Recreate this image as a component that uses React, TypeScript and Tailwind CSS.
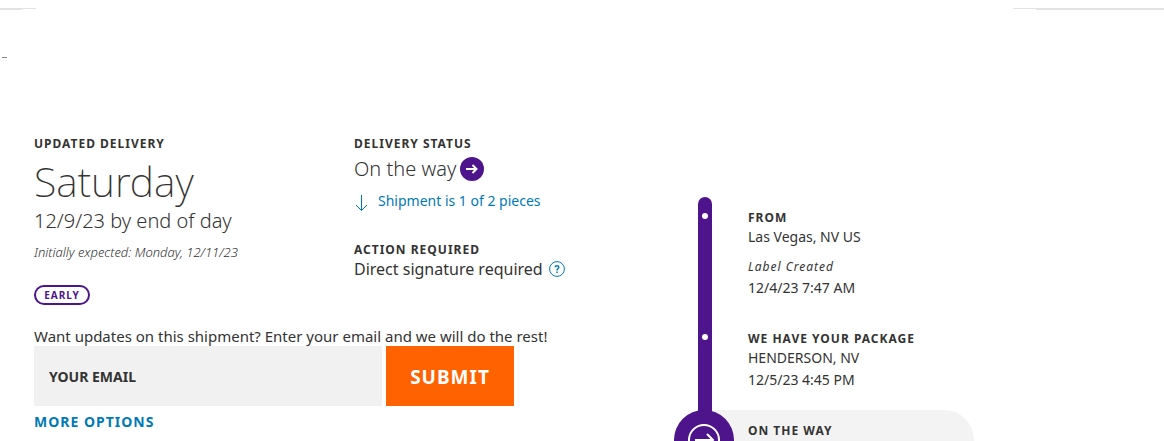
import React from "react";

interface ScanEvent {
  title: string;
  place: string;
  note?: string;
  time: string;
}

const events: ScanEvent[] = [
  {
    title: "FROM",
    place: "Las Vegas, NV US",
    note: "Label Created",
    time: "12/4/23 7:47 AM",
  },
  {
    title: "WE HAVE YOUR PACKAGE",
    place: "HENDERSON, NV",
    time: "12/5/23 4:45 PM",
  },
];

const Heading: React.FC<{ children: React.ReactNode }> = ({ children }) => (
  <h2 className="text-[12px] leading-[17px] font-bold tracking-[1px] whitespace-nowrap">{children}</h2>
);

const TopRule: React.FC = () => (
  <div className="flex justify-between pt-2">
    <div>
      <div className="h-px w-9 bg-[#e3e3e3]" />
      <div className="h-px w-[22px] bg-[#e3e3e3]" />
    </div>
    <div className="flex flex-col items-end">
      <div className="h-px w-[151px] bg-[#e3e3e3]" />
      <div className="h-px w-32 bg-[#e3e3e3]" />
    </div>
  </div>
);

const DeliveryDate: React.FC = () => (
  <section className="w-80">
    <Heading>UPDATED DELIVERY</Heading>
    <p className="mt-[3px] text-[41px] leading-[52px] font-extralight">Saturday</p>
    <p className="text-[20px] leading-7 font-light">12/9/23 by end of day</p>
    <p className="mt-[7px] text-[13px] leading-5 font-light italic">
      Initially expected: Monday, 12/11/23
    </p>
    <span className="mt-[23px] flex h-5 w-14 items-center justify-center rounded-full border-2 border-[#4d148c] text-[10px] leading-4 font-bold tracking-[1px] text-[#4d148c]">
      EARLY
    </span>
  </section>
);

const DeliveryStatus: React.FC = () => (
  <section>
    <Heading>DELIVERY STATUS</Heading>
    <div className="mt-[3px] flex h-7 items-center gap-1">
      <p className="text-[20px] leading-7 font-light">On the way</p>
      <svg className="h-6 w-6" viewBox="0 0 24 24" aria-hidden="true">
        <circle cx="12" cy="12" r="12" fill="#4d148c" />
        <path d="M6 12h10M12.500 8l4 4-4 4" fill="none" stroke="#fff" strokeWidth="2" />
      </svg>
    </div>
    <a href="#pieces" className="mt-2 flex h-5 items-center gap-2 text-[14px] leading-5 text-[#007ab7]">
      <svg className="mt-1 h-4 w-4" viewBox="0 0 16 16" aria-hidden="true">
        <path d="M7.500 0v15.500M2 10l5.500 5.500L13 10" fill="none" stroke="#007ab7" />
      </svg>
      <span>Shipment is 1 of 2 pieces</span>
    </a>
    <div className="mt-[30px]">
      <Heading>ACTION REQUIRED</Heading>
      <div className="flex items-center gap-[6px]">
        <p className="text-[16px] leading-[22px]">Direct signature required</p>
        <button type="button" aria-label="About signatures">
          <svg className="h-4 w-4" viewBox="0 0 16 16">
            <circle cx="8" cy="8" r="7.400" fill="none" stroke="#007ab7" />
            <path d="M6.200 6.200C6.200 4.200 9.800 4.200 9.800 6.200C9.800 7.800 8 7.800 8 9.400M8 10.600v1.400" fill="none" stroke="#007ab7" strokeWidth="1.500" />
          </svg>
        </button>
      </div>
    </div>
  </section>
);

const EmailForm: React.FC = () => (
  <form className="mt-[22px]" onSubmit={(e) => e.preventDefault()}>
    <label htmlFor="email" className="block text-[15px] leading-[19px] whitespace-nowrap">
      Want updates on this shipment? Enter your email and we will do the rest!
    </label>
    <div className="flex gap-1">
      <input
        id="email"
        type="email"
        placeholder="YOUR EMAIL"
        className="h-[60px] w-[348px] bg-[#f1f1f1] px-[15px] text-[14px] font-bold outline-none placeholder:text-[#333] placeholder:opacity-100"
      />
      <button
        type="submit"
        className="h-[60px] w-32 bg-[#ff6200] pt-[2px] text-[19px] font-bold tracking-[1px] text-white"
      >
        SUBMIT
      </button>
    </div>
    <a href="#options" className="mt-[6px] block text-[14px] leading-5 font-bold tracking-[1px] text-[#007ab7]">
      MORE OPTIONS
    </a>
  </form>
);

const Timeline: React.FC = () => (
  <section className="w-[300px] pt-[62px]">
    <ol>
      {events.map((event, i) => (
        <li key={event.title} className="flex">
          <div
            className={
              i === 0
                ? "ml-6 flex w-[14px] justify-center rounded-t-full bg-[#4d148c] pt-4"
                : "ml-6 flex w-[14px] justify-center bg-[#4d148c] pt-4"
            }
          >
            <div className="h-[6px] w-[6px] rounded-full bg-white" />
          </div>
          <div className={i === 0 ? "h-[121px] pt-3 pl-9" : "h-[92px] pt-3 pl-9"}>
            <Heading>{event.title}</Heading>
            <p className="text-[14px] leading-[22px]">{event.place}</p>
            {event.note && (
              <p className="mt-[9px] text-[12px] leading-5 tracking-[1px] italic">{event.note}</p>
            )}
            <p className="text-[14px] leading-[22px]">{event.time}</p>
          </div>
        </li>
      ))}
      <li className="flex h-[60px] rounded-full bg-[#f3f3f3]">
        <svg className="h-[60px] w-[60px]" viewBox="0 0 60 60" aria-hidden="true">
          <circle cx="30" cy="30" r="30" fill="#4d148c" />
          <rect x="24" width="14" height="4" fill="#4d148c" />
          <circle cx="30" cy="30" r="15" fill="none" stroke="#fff" strokeWidth="2" />
          <path d="M21 30h18M33 24l6 6-6 6" fill="none" stroke="#fff" strokeWidth="2" />
        </svg>
        <div className="pt-3 pl-[14px]">
          <Heading>ON THE WAY</Heading>
        </div>
      </li>
    </ol>
  </section>
);

const App: React.FC = () => {
  return (
    <div className="h-screen overflow-hidden bg-white font-['Noto_Sans',sans-serif] text-[#333]">
      <TopRule />
      <div className="mt-[47px] ml-[2px] h-px w-[5px] bg-[#888]" />
      <main className="flex pt-[77px] pl-[34px]">
        <div className="w-[640px]">
          <div className="flex">
            <DeliveryDate />
            <DeliveryStatus />
          </div>
          <EmailForm />
        </div>
        <Timeline />
      </main>
    </div>
  );
};

export default App;
